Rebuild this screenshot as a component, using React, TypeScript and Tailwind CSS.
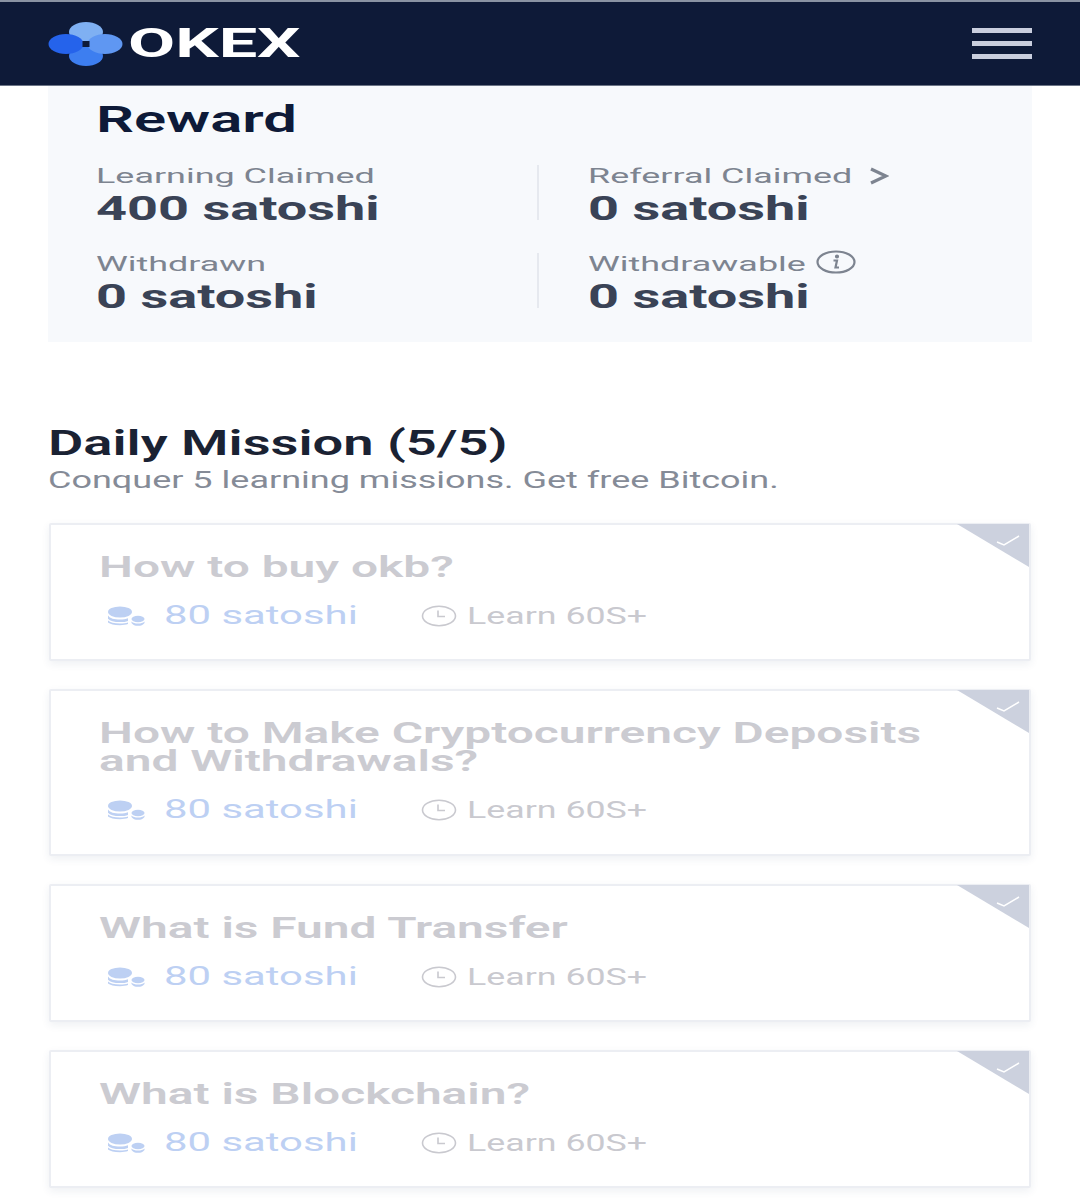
import React from 'react';

const T: React.FC<{ className: string; children: React.ReactNode }> = ({ className, children }) => (
  <span className={`block origin-left whitespace-nowrap ${className}`}>{children}</span>
);

const Logo = () => (
  <svg width="76" height="46" viewBox="0 0 76 46" className="shrink-0">
    <ellipse cx="38" cy="11" rx="17" ry="10" fill="#7fb0f2" />
    <ellipse cx="38" cy="35" rx="17" ry="10" fill="#3d7ef0" />
    <ellipse cx="57" cy="23" rx="17.5" ry="10" fill="#5f97f2" />
    <ellipse cx="18" cy="23" rx="17.5" ry="10" fill="#2563eb" />
    <rect x="34.5" y="20" width="7" height="6" fill="#0e1a38" />
  </svg>
);

const Coins = () => (
  <svg width="38" height="20" viewBox="0 0 38 20" className="shrink-0">
    <g fill="#bdd0f3">
      <ellipse cx="13" cy="6" rx="12" ry="5.5" />
      <path d="M1 9.500c2 3 6 4 12 4 3 0 6-.3 8-1.200v2.600c-2 .9-5 1.200-8 1.200-6 0-10-1.200-12-3.400z" />
      <path d="M1 14.500c2 2 6 3 12 3 3 0 6-.2 8-1v1.600c-2 .8-5 1.100-8 1.100-6 0-10-1-12-2.600z" />
      <ellipse cx="31" cy="13" rx="6.500" ry="3.200" />
      <path d="M24.500 15.500c1.500 1.500 3.500 2 6.500 2s5-.5 6.500-2v1.500c-1.500 2-3.500 2.800-6.500 2.800s-5-.8-6.500-2.800z" />
    </g>
  </svg>
);

const Clock = () => (
  <svg width="36" height="22" viewBox="0 0 36 22" fill="none" stroke="#c9c9cf" strokeWidth="1.6" className="shrink-0">
    <ellipse cx="18" cy="11" rx="16.500" ry="9.700" />
    <path d="M17 5.500v6h7" />
  </svg>
);

const missions = [
  { lines: ['How to buy okb?'], h: 'h-[138px]' },
  { lines: ['How to Make Cryptocurrency Deposits', 'and Withdrawals?'], h: 'h-[167px]' },
  { lines: ['What is Fund Transfer'], h: 'h-[138px]' },
  { lines: ['What is Blockchain?'], h: 'h-[138px]' },
];

const Stat: React.FC<{ label: React.ReactNode; value: string }> = ({ label, value }) => (
  <div className="flex flex-col">
    <div className="flex items-center h-[24px] mt-[1px] text-[#7d8490]">{label}</div>
    <T className="text-[34px] leading-[40px] font-bold text-[#3a4356] scale-x-[1.59]">{value}</T>
  </div>
);

const Label: React.FC<{ children: React.ReactNode }> = ({ children }) => (
  <T className="text-[21px] leading-[24px] scale-x-[1.71]">{children}</T>
);

const Divider = () => <div className="w-[2px] h-[55px] mt-[2px] mr-[49px] bg-[#e6e9ef] shrink-0" />;

export default function App() {
  return (
    <div className="w-[1080px] h-[1200px] overflow-hidden bg-white font-['Roboto',sans-serif]">
      <header className="h-[86px] bg-[#0e1a38] border-t-2 border-t-[#8a93a3] border-b border-b-[#6b7486] pl-[48px] pr-[48px] flex items-center justify-between">
        <div className="flex items-center gap-[4px]">
          <Logo />
          <T className="text-[40px] leading-[46px] font-bold text-white scale-x-[1.71]">OKEX</T>
        </div>
        <div className="flex flex-col gap-[8px] w-[60px]">
          <div className="h-[5px] bg-[#c9cede]" />
          <div className="h-[5px] bg-[#c9cede]" />
          <div className="h-[5px] bg-[#c9cede]" />
        </div>
      </header>

      <section className="mx-[48px] h-[256px] bg-[#f7f9fc] pl-[48px] pt-[14px]">
        <T className="text-[36px] leading-[40px] font-semibold text-[#0e1a38] scale-x-[1.66]">Reward</T>
        <div className="mt-[23px] grid grid-cols-[441px_1fr] gap-y-[23px]">
          <Stat label={<Label>Learning Claimed</Label>} value="400 satoshi" />
          <div className="flex items-start">
            <Divider />
            <Stat
              label={
                <>
                  <Label>Referral Claimed</Label>
                  <svg width="20" height="20" viewBox="0 0 20 20" fill="none" stroke="#7d8490" strokeWidth="3.2" className="ml-[126px]">
                    <path d="M2 3l15 7-15 7" />
                  </svg>
                </>
              }
              value="0 satoshi"
            />
          </div>
          <Stat label={<Label>Withdrawn</Label>} value="0 satoshi" />
          <div className="flex items-start">
            <Divider />
            <Stat
              label={
                <>
                  <Label>Withdrawable</Label>
                  <svg width="40" height="24" viewBox="0 0 40 24" fill="none" stroke="#7d8490" strokeWidth="2.2" className="ml-[101px] mb-[4px]">
                    <ellipse cx="20" cy="12" rx="18.500" ry="10.500" />
                    <path d="M17.500 10.500h3.500l-1.500 7h3.500" />
                    <circle cx="21" cy="6.500" r="1" fill="#7d8490" />
                  </svg>
                </>
              }
              value="0 satoshi"
            />
          </div>
        </div>
      </section>

      <section className="mx-[48px] pt-[82px]">
        <T className="text-[35px] leading-[40px] font-semibold text-[#1a2233] scale-x-[1.55]">Daily Mission (5/5)</T>
        <T className="text-[24px] leading-[30px] mt-[1px] text-[#858b97] scale-x-[1.5]">Conquer 5 learning missions. Get free Bitcoin.</T>

        <div className="mt-[28px] ml-[1px] flex flex-col gap-[28px] w-[982px]">
          {missions.map((m) => (
            <div
              key={m.lines[0]}
              className={`relative ${m.h} bg-white border-2 border-[#eceef3] rounded-[2px] shadow-[0_3px_8px_rgba(40,60,100,0.08)] pl-[48px] pt-[28px]`}
            >
              <svg width="72" height="43" viewBox="0 0 72 43" className="absolute top-[-1px] right-0">
                <path d="M0 0h72v43z" fill="#ccd1de" />
                <path d="M40 18l7 3 15-9" fill="none" stroke="#fff" strokeWidth="1.500" />
              </svg>
              {m.lines.map((l) => (
                <T key={l} className="text-[30px] leading-[28px] font-semibold text-[#cbcbd1] scale-x-[1.595]">{l}</T>
              ))}
              <div className="flex items-center pt-[20px]">
                <div className="ml-[8px] w-[37px]"><Coins /></div>
                <div className="ml-[20px] w-[257px]">
                  <T className="text-[26px] leading-[30px] -mt-[1px] mb-[1px] text-[#bdd0f3] scale-x-[1.61]">80 satoshi</T>
                </div>
                <Clock />
                <div className="ml-[10px]">
                  <T className="text-[24px] leading-[30px] text-[#c9c9cf] scale-x-[1.49]">Learn 60S+</T>
                </div>
              </div>
            </div>
          ))}
        </div>
      </section>
    </div>
  );
}
